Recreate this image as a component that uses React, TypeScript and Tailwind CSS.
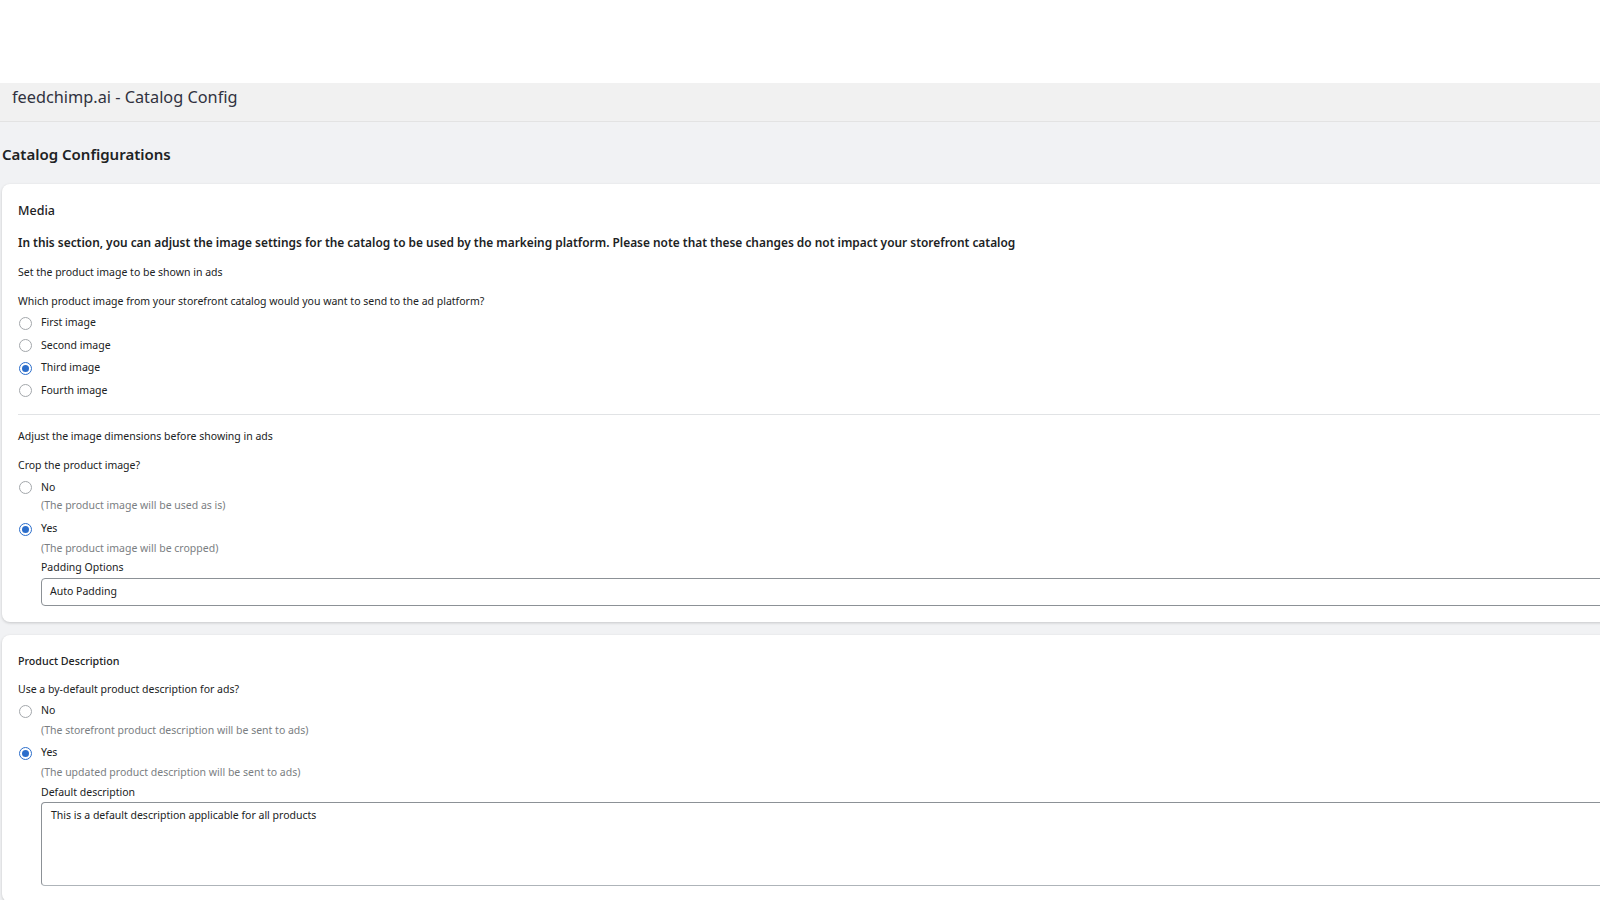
import React from 'react';

function Radio({ label, checked }: { label: string; checked?: boolean }) {
  return (
    <div className="flex items-center h-full">
      <span
        className={
          checked
            ? 'ml-[1px] flex items-center justify-center w-[13px] h-[13px] rounded-full border border-[#2c6ecb] bg-white'
            : 'ml-[1px] w-[13px] h-[13px] rounded-full border border-[#a3a7ab] bg-white'
        }
      >
        {checked && <span className="block w-[7px] h-[7px] rounded-full bg-[#2c6ecb]" />}
      </span>
      <span className="ml-[9px] text-[10.5px] text-[#202223]">{label}</span>
    </div>
  );
}

export default function App() {
  return (
    <div className="w-full h-[900px] overflow-hidden bg-white font-['Noto_Sans',sans-serif] text-[#202223]">
      <div className="w-[1720px]">
        <div className="h-[83px] bg-white" />
        <div className="h-[39px] bg-[#f1f1f1] border-b border-[#e3e3e3] flex items-center pl-3 pb-[9px]">
          <span className="text-[16.3px] text-[#303240]">feedchimp.ai - Catalog Config</span>
        </div>

        <div className="bg-[#f1f2f4] pb-10">
          <div className="h-[62px] flex items-center pl-[2px] pt-[2px]">
            <h1 className="text-[15px] font-semibold text-[#202223]">Catalog Configurations</h1>
          </div>

          {/* Media */}
          <div className="ml-[2px] bg-white rounded-lg shadow-[0_1px_3px_rgba(0,0,0,0.18)] px-4 pt-[17px] pb-4">
            <div className="h-5 flex items-center text-[12.5px] font-medium">Media</div>
            <div className="h-5 mt-3 flex items-center text-[11.9px] font-semibold">
              In this section, you can adjust the image settings for the catalog to be used by the markeing platform. Please note that these changes do not impact your storefront catalog
            </div>
            <div className="h-5 mt-[10px] flex items-center text-[10.5px]">Set the product image to be shown in ads</div>
            <div className="h-5 mt-[9px] flex items-center text-[10.5px]">
              Which product image from your storefront catalog would you want to send to the ad platform?
            </div>
            <div className="flex flex-col">
              <div className="h-[22.5px]"><Radio label="First image" /></div>
              <div className="h-[22.5px]"><Radio label="Second image" /></div>
              <div className="h-[22.5px]"><Radio label="Third image" checked /></div>
              <div className="h-[22.5px]"><Radio label="Fourth image" /></div>
            </div>
            <div className="mt-3 border-t border-[#e1e3e5]" />
            <div className="h-5 mt-[12px] flex items-center text-[10.5px]">Adjust the image dimensions before showing in ads</div>
            <div className="h-5 mt-[9px] flex items-center text-[10.5px]">Crop the product image?</div>
            <div className="h-[21px] mt-[1px]"><Radio label="No" /></div>
            <div className="h-4 pl-[23px] flex items-center text-[10.5px] text-[#7a7e82]">(The product image will be used as is)</div>
            <div className="h-[22px] mt-[4px]"><Radio label="Yes" checked /></div>
            <div className="pl-[23px]">
              <div className="h-4 mt-[1px] flex items-center text-[10.5px] text-[#7a7e82]">(The product image will be cropped)</div>
              <div className="h-4 mt-[3px] flex items-center text-[10.5px]">Padding Options</div>
              <div className="h-[28px] mt-[2px] border border-[#8c9196] rounded-[4px] flex items-center px-2 text-[10.5px]">
                Auto Padding
              </div>
            </div>
          </div>

          {/* Product Description */}
          <div className="mt-[13px] ml-[2px] bg-white rounded-lg shadow-[0_1px_3px_rgba(0,0,0,0.18)] px-4 pt-[16px] pb-4">
            <div className="h-5 flex items-center text-[10.7px] font-medium">Product Description</div>
            <div className="h-5 mt-[9px] flex items-center text-[10.5px]">Use a by-default product description for ads?</div>
            <div className="h-[22px]"><Radio label="No" /></div>
            <div className="h-4 mt-[1px] pl-[23px] flex items-center text-[10.5px] text-[#7a7e82]">
              (The storefront product description will be sent to ads)
            </div>
            <div className="h-[22px] mt-[3px]"><Radio label="Yes" checked /></div>
            <div className="pl-[23px]">
              <div className="h-4 mt-[1px] flex items-center text-[10.5px] text-[#7a7e82]">(The updated product description will be sent to ads)</div>
              <div className="h-4 mt-[4px] flex items-center text-[10.5px]">Default description</div>
              <textarea
                readOnly
                className="block w-full h-[84px] mt-[1px] border border-[#8c9196] border-b-[#aeb4b9] rounded-[4px] px-[9px] pt-[4px] text-[10.5px] leading-4 resize-none outline-none"
                value="This is a default description applicable for all products"
              />
            </div>
          </div>
        </div>
      </div>
    </div>
  );
}
